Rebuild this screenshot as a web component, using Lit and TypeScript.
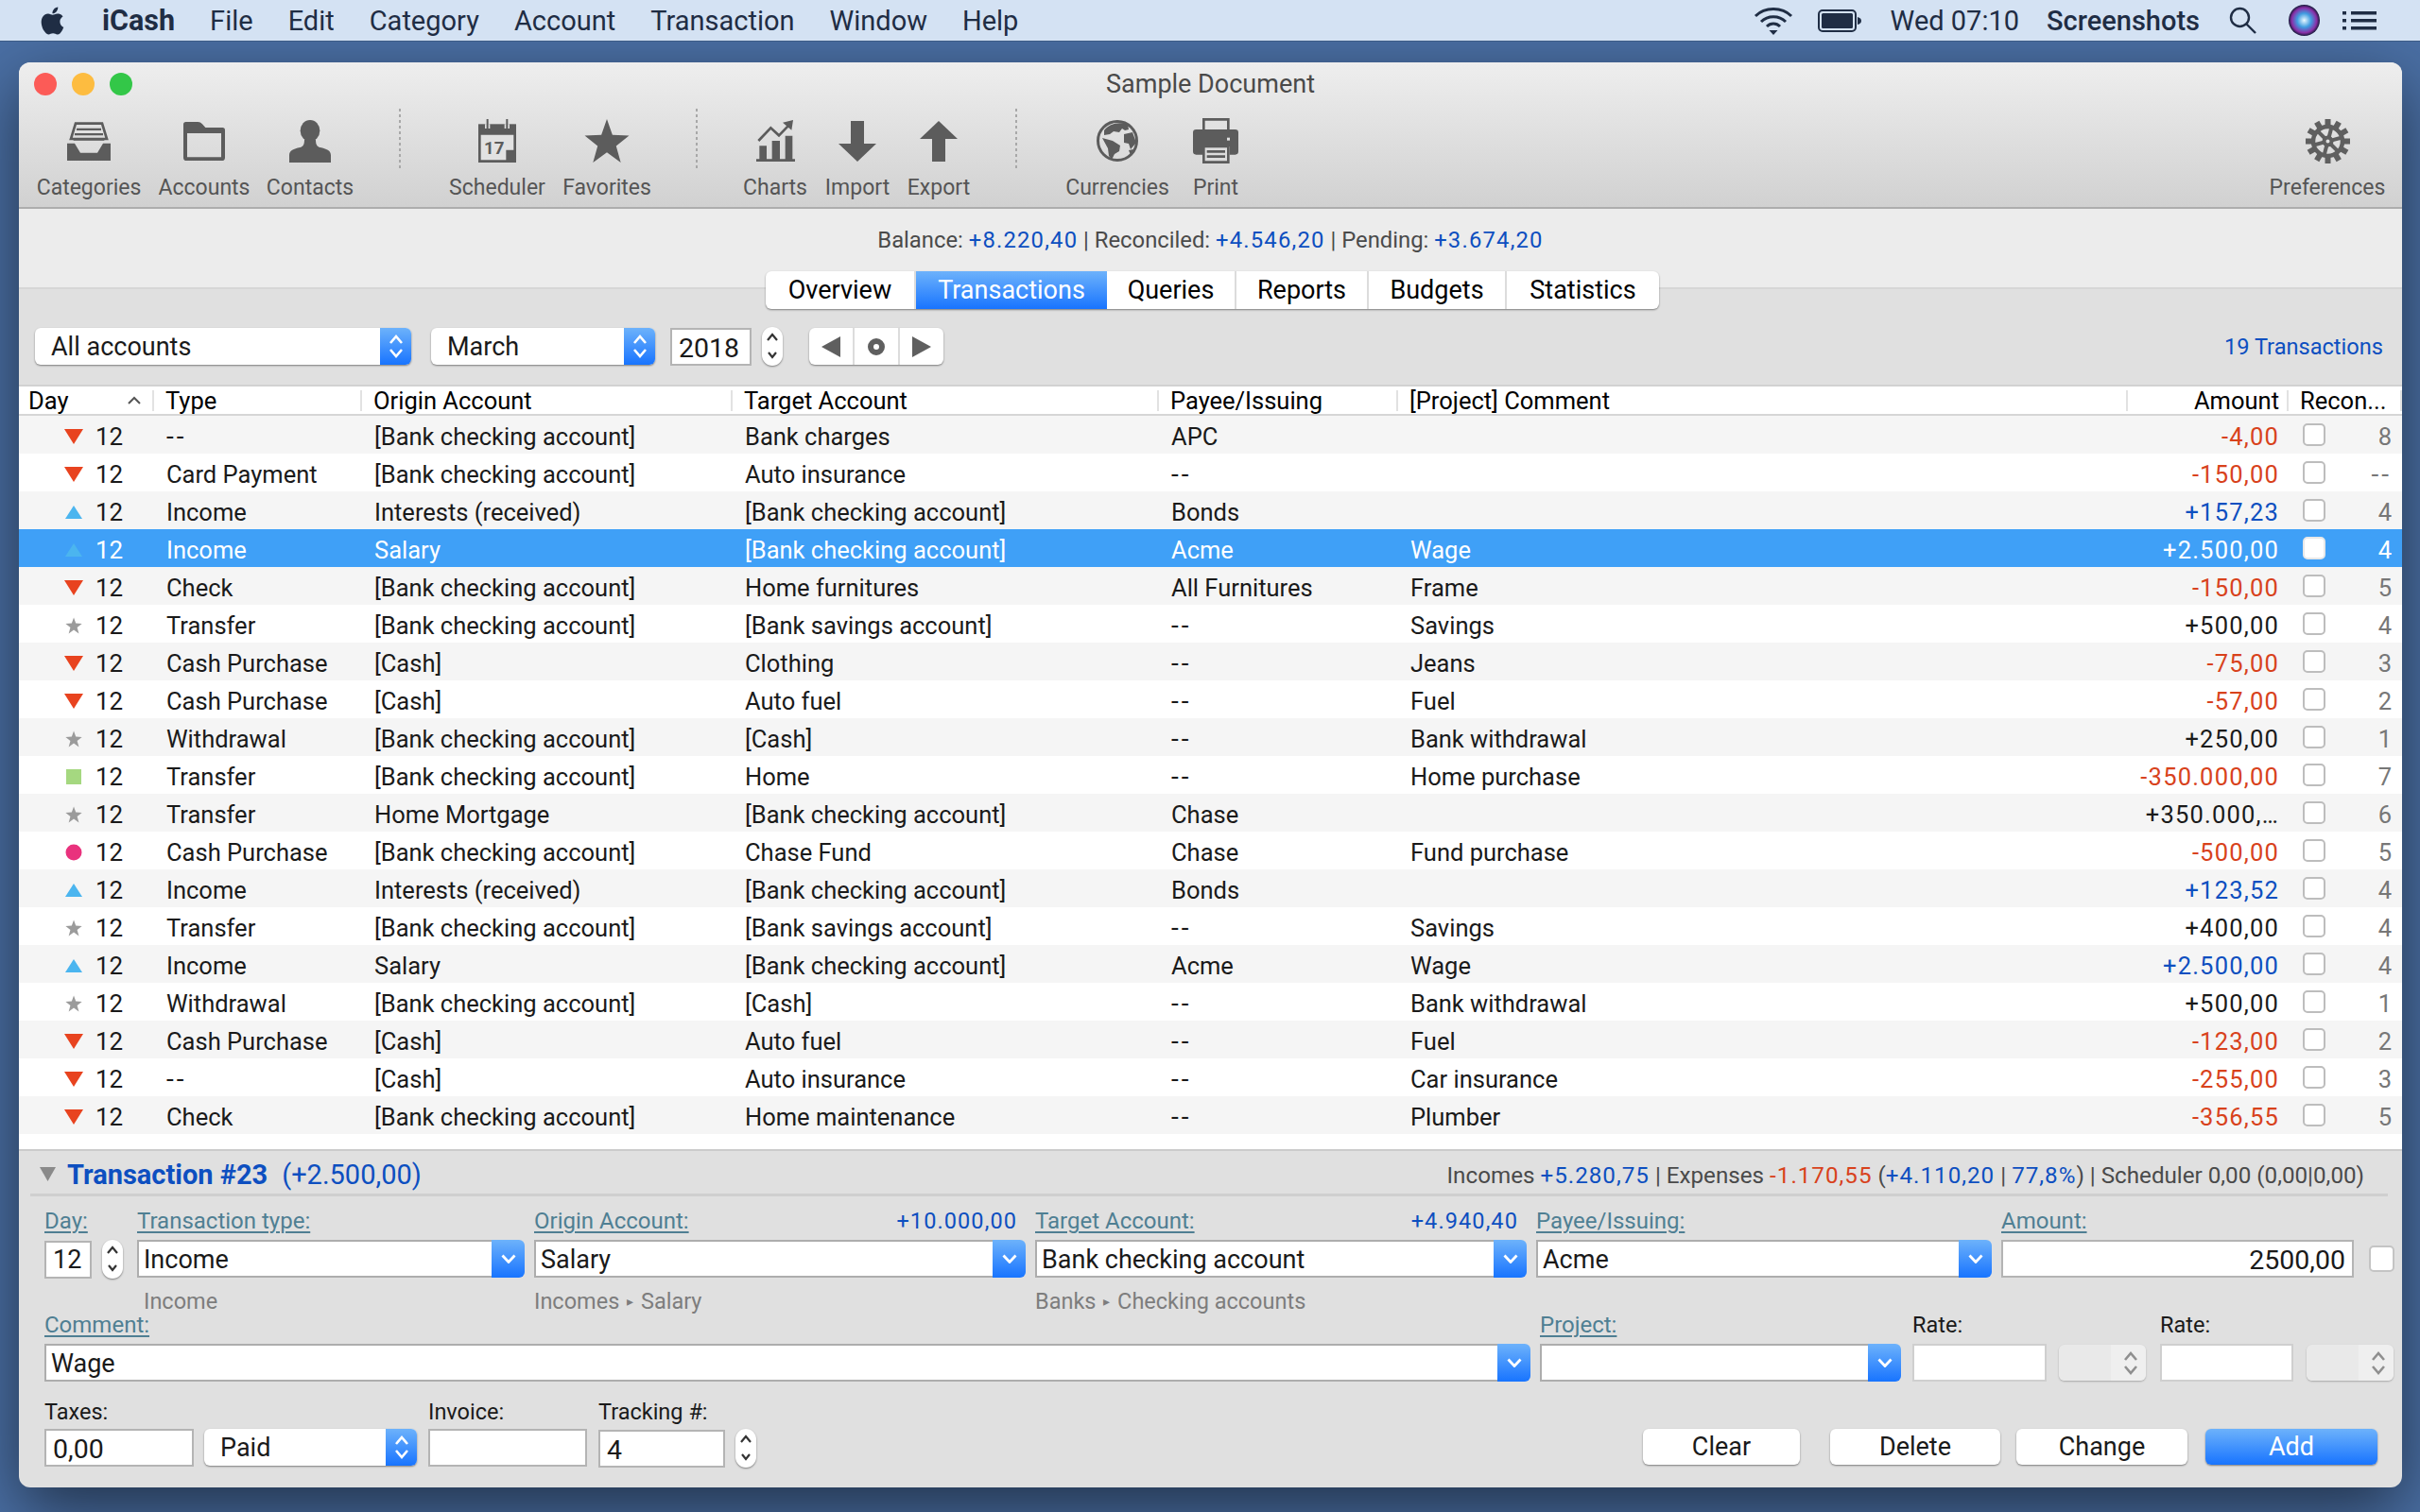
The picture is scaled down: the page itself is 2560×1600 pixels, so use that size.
import { LitElement, css, html, svg } from "lit";
import { customElement } from "lit/decorators.js";

type Tx = [string, string, string, string, string, string, string, string];

const ROWS: Tx[] = [
  ["down", "--", "[Bank checking account]", "Bank charges", "APC", "", "-4,00", "8"],
  ["down", "Card Payment", "[Bank checking account]", "Auto insurance", "--", "", "-150,00", "--"],
  ["up", "Income", "Interests (received)", "[Bank checking account]", "Bonds", "", "+157,23", "4"],
  ["up", "Income", "Salary", "[Bank checking account]", "Acme", "Wage", "+2.500,00", "4"],
  ["down", "Check", "[Bank checking account]", "Home furnitures", "All Furnitures", "Frame", "-150,00", "5"],
  ["star", "Transfer", "[Bank checking account]", "[Bank savings account]", "--", "Savings", "+500,00", "4"],
  ["down", "Cash Purchase", "[Cash]", "Clothing", "--", "Jeans", "-75,00", "3"],
  ["down", "Cash Purchase", "[Cash]", "Auto fuel", "--", "Fuel", "-57,00", "2"],
  ["star", "Withdrawal", "[Bank checking account]", "[Cash]", "--", "Bank withdrawal", "+250,00", "1"],
  ["square", "Transfer", "[Bank checking account]", "Home", "--", "Home purchase", "-350.000,00", "7"],
  ["star", "Transfer", "Home Mortgage", "[Bank checking account]", "Chase", "", "+350.000,…", "6"],
  ["circle", "Cash Purchase", "[Bank checking account]", "Chase Fund", "Chase", "Fund purchase", "-500,00", "5"],
  ["up", "Income", "Interests (received)", "[Bank checking account]", "Bonds", "", "+123,52", "4"],
  ["star", "Transfer", "[Bank checking account]", "[Bank savings account]", "--", "Savings", "+400,00", "4"],
  ["up", "Income", "Salary", "[Bank checking account]", "Acme", "Wage", "+2.500,00", "4"],
  ["star", "Withdrawal", "[Bank checking account]", "[Cash]", "--", "Bank withdrawal", "+500,00", "1"],
  ["down", "Cash Purchase", "[Cash]", "Auto fuel", "--", "Fuel", "-123,00", "2"],
  ["down", "--", "[Cash]", "Auto insurance", "--", "Car insurance", "-255,00", "3"],
  ["down", "Check", "[Bank checking account]", "Home maintenance", "--", "Plumber", "-356,55", "5"],
];

const SELECTED = 3;
const STAR = "12,0 15,8.5 24,9 17,14.5 19.5,23.5 12,18 4.5,23.5 7,14.5 0,9 9,8.5";

const marker = (kind: string) => {
  const shapes: Record<string, unknown> = {
    down: svg`<polygon points="0,0 20,0 10,16" fill="#e8431f" />`,
    up: svg`<polygon points="1,15 19,15 10,1" fill="#4bb5ef" />`,
    star: svg`<polygon points=${STAR} fill="#9b9b9b" transform="translate(1.4 -.5) scale(.72)" />`,
    square: svg`<rect x="2" y="0" width="16" height="16" fill="#a5d880" />`,
    circle: svg`<circle cx="10" cy="8" r="8.5" fill="#e9327d" />`,
  };
  return html`<svg class="marker" viewBox="0 0 20 16">${shapes[kind]}</svg>`;
};

// SF's hyphen is much wider than Roboto's
const cell = (v: string) => (v === "--" ? html`<span class="dash">--</span>` : v);

const upDown = html`<svg class="updown" viewBox="0 0 16 27">
  <path d="M2 10 8 3l6 7M2 17l6 7 6-7" fill="none" stroke="currentColor" stroke-width="2.6" />
</svg>`;

const downOnly = html`<svg class="downonly" viewBox="0 0 16 10">
  <path d="M1.5 1.5 8 8.5l6.5-7" fill="none" stroke="#fff" stroke-width="2.8" />
</svg>`;

const stepper = html`<div class="stepper">
  <svg viewBox="0 0 22 41">
    <path d="M6 14l5-6 5 6M7 27l4 5 4-5" fill="none" stroke="#333" stroke-width="2.2" />
  </svg>
</div>`;

const gear = svg`<g fill="#5f5f5f">
  ${Array.from({ length: 12 }, (_, i) => svg`<rect x="20.5" y="0" width="6" height="9" transform="rotate(${i * 30} 23.5 23.5)" />`)}
  ${Array.from({ length: 6 }, (_, i) => svg`<rect x="21.5" y="8" width="4" height="12" transform="rotate(${i * 60 + 15} 23.5 23.5)" />`)}
  </g>
  <circle cx="23.5" cy="23.5" r="15.5" fill="none" stroke="#5f5f5f" stroke-width="4.5" />
  <circle cx="23.5" cy="23.5" r="4" fill="none" stroke="#5f5f5f" stroke-width="4" />`;

const TOOL_ICONS: Record<string, unknown> = {
  Categories: html`<svg width="46" height="41" viewBox="0 0 138 123">
    <path d="M0 68H24L42 98H96L114 68H138V123H0Z" />
    <path d="M27 5H111L126 54H12Z" fill="none" stroke="#5c5c5c" stroke-width="8" />
    <path d="M30 20H108V27H30ZM24 36H114V43H24ZM20 52H118V59H20Z" />
  </svg>`,
  Accounts: html`<svg width="44" height="41" viewBox="0 0 132 123">
    <path fill-rule="evenodd" d="M8 0H46Q54 0 60 7L70 18H124Q132 18 132 26V113Q132 123 122 123H10Q0 123 0 113V8Q0 0 8 0ZM12 36V112H120V36Z" />
  </svg>`,
  Contacts: html`<svg width="44" height="45" viewBox="0 0 132 135">
    <ellipse cx="66" cy="34" rx="31" ry="34" />
    <path d="M0 135V112C0 96 14 92 34 87C44 84 48 78 48 62H84C84 78 88 84 98 87C118 92 132 96 132 112V135Z" />
  </svg>`,
  Scheduler: html`<svg width="40" height="46" viewBox="0 0 120 138">
    <rect y="16" width="120" height="122" />
    <path d="M26 0h6v32h-6zM88 0h6v32h-6z" />
    <path d="M21 16h5v14h-5zM32 16h5v14h-5zM83 16h5v14h-5zM94 16h5v14h-5z" fill="#e0e0e0" />
    <path d="M8 50H112V98H88V130H8Z" fill="#e2e2e2" />
    <text x="18" y="112" font-size="56" font-weight="700" font-family="Roboto, sans-serif">17</text>
  </svg>`,
  Favorites: html`<svg width="48" height="46" viewBox="0 0 24 23.5"><polygon points=${STAR} /></svg>`,
  Charts: html`<svg width="41" height="44" viewBox="0 0 123 132">
    <path d="M0 124H123V132H0ZM10 82H33V124H10ZM50 66H75V124H50ZM92 50H115V124H92Z" />
    <path d="M7 66 46 25 72 49 106 14" fill="none" stroke="#5c5c5c" stroke-width="8" />
    <path d="M84 8 117 0 112 32Z" />
  </svg>`,
  Import: html`<svg width="40" height="43" viewBox="0 0 40 43"><path d="M13 0H27V24H40L20 43 0 24H13Z" /></svg>`,
  Export: html`<svg width="40" height="43" viewBox="0 0 40 43"><path d="M13 43H27V19H40L20 0 0 19H13Z" /></svg>`,
  Currencies: html`<svg width="44" height="44" viewBox="0 0 44 44">
    <circle cx="22" cy="22" r="20.5" fill="none" stroke="#5c5c5c" stroke-width="3" />
    <path d="M8 11C13 4 24 1 33 5L34 10 30 11 27 9 24 13 18 12 14 15 8 16Z" />
    <path d="M29 15 38 13 42 24 36 31 34 25 29 24Z" />
    <path d="M6 19 17 22 25 27 24 33 19 36 16 42 13 38 12 30Z" />
    <path d="M34 32 39 31 36 37Z" />
  </svg>`,
  Print: html`<svg width="48" height="48" viewBox="0 0 144 144">
    <path fill-rule="evenodd" d="M30 0H116V36H108V8H38V36H30Z" />
    <path d="M10 36H134Q144 36 144 46V106Q144 116 134 116H116V90H30V116H10Q0 116 0 106V46Q0 36 10 36Z" />
    <path fill-rule="evenodd" d="M30 86H116V144H30ZM38 94V136H108V94Z" />
    <path d="M44 102H102V110H44ZM44 118H102V126H44Z" />
    <rect x="108" y="62" width="9" height="9" fill="#e0e0e0" />
  </svg>`,
  Preferences: html`<svg width="47" height="47" viewBox="0 0 47 47">${gear}</svg>`,
};

@customElement("app-root")
export class AppRoot extends LitElement {
  static override styles = css`
    :host {
      display: block;
      width: 2560px;
      height: 1600px;
      overflow: hidden;
      background: #4a6fa4;
      font-family: Roboto, "Liberation Sans", sans-serif;
      color: #1a1a1a;
    }

    * {
      box-sizing: border-box;
    }

    /* menu bar */
    .menubar {
      position: relative;
      z-index: 2;
      display: flex;
      align-items: center;
      height: 44px;
      padding-left: 41px;
      background: #d4e2f3;
      border-bottom: 1px solid #3d5c86;
      color: #1f2d44;
      font-size: 29px;
    }
    .apple {
      width: 29px;
      height: 32px;
      margin-right: 38px;
      fill: #1f2d44;
    }
    .menubar span {
      margin-right: 37px;
    }
    .menubar b {
      font-size: 30.5px;
      font-weight: 700;
    }
    .menubar .status b {
      font-size: 29px;
      font-weight: 500;
    }
    .status {
      display: flex;
      align-items: center;
      margin-left: auto;
      height: 100%;
    }
    .status svg {
      flex: none;
    }
    .status span {
      margin-right: 0;
    }

    /* window */
    .window {
      display: flex;
      flex-direction: column;
      width: 2521px;
      height: 1508px;
      margin: 22px 0 0 20px;
      border-radius: 12px;
      overflow: hidden;
      background: #e0e0e0;
      box-shadow: 0 24px 70px rgba(0, 0, 0, 0.55);
    }
    .chrome {
      height: 155px;
      flex: none;
      background: linear-gradient(#eeeeee, #d1d1d1);
      border-bottom: 2px solid #adadad;
    }
    .titlebar {
      display: grid;
      grid-template-columns: 1fr auto 1fr;
      align-items: center;
      height: 44px;
      padding-top: 1px;
      font-size: 27px;
      color: #4a4a4a;
    }
    .lights {
      display: flex;
      gap: 16px;
      padding-left: 16px;
    }
    .lights i {
      width: 24px;
      height: 24px;
      border-radius: 50%;
    }
    .toolbar {
      display: grid;
      grid-template-columns: 124px 120px 104px 86px 120px 112px 78px 88px 86px 86px 78px 136px 72px 1fr 132px;
      padding: 14px 13px 0 12px;
      height: 109px;
    }
    .tool {
      display: flex;
      flex-direction: column;
      align-items: center;
      font-size: 23px;
      line-height: 27px;
      color: #555;
      white-space: nowrap;
    }
    .tool .ic {
      display: flex;
      align-items: center;
      justify-content: center;
      height: 50px;
      margin-bottom: 11px;
    }
    .tool svg {
      fill: #5c5c5c;
    }
    .sep {
      justify-self: center;
      width: 2px;
      height: 63px;
      margin-top: -9px;
      background: repeating-linear-gradient(#a8a8a8 0 3px, transparent 3px 6px);
    }

    /* balance + tabs */
    .summary {
      flex: none;
      height: 85px;
      padding-top: 19px;
      text-align: center;
      font-size: 23.8px;
      line-height: 28px;
      color: #4a4a4a;
      background: #ececec;
      border-bottom: 2px solid #d6d6d6;
    }
    .blue {
      color: #0d4fc0;
      letter-spacing: 1px;
    }
    .summary .blue {
      letter-spacing: 1.2px;
    }
    .red {
      color: #d8421c;
      letter-spacing: 1px;
    }
    .tabs {
      position: relative;
      display: flex;
      width: 945px;
      height: 40px;
      margin: -19px 0 0 790px;
      border-radius: 6px;
      overflow: hidden;
      background: #fff;
      box-shadow: 0 1px 2px rgba(0, 0, 0, 0.45);
      font-size: 27px;
      color: #000;
    }
    .tabs div {
      display: flex;
      align-items: center;
      justify-content: center;
      border-right: 2px solid #dcdcdc;
    }
    .tabs div:last-child {
      border-right: 0;
    }
    .tabs .on {
      color: #fff;
      border-right: 0;
      background: linear-gradient(#6db2fb, #1874ff);
    }

    /* filter bar */
    .filters {
      flex: none;
      display: flex;
      align-items: center;
      height: 80px;
      padding: 0 20px 1px 17px;
    }
    .popup {
      display: flex;
      align-items: center;
      justify-content: space-between;
      height: 39px;
      padding-left: 17px;
      border-radius: 6px;
      background: #fff;
      box-shadow: 0 1px 2px rgba(0, 0, 0, 0.45);
      font-size: 27px;
    }
    .popup .arrows {
      display: flex;
      align-items: center;
      justify-content: center;
      align-self: stretch;
      width: 33px;
      border-radius: 0 6px 6px 0;
      color: #fff;
      background: linear-gradient(#6db2fb, #1874ff);
    }
    .updown {
      width: 16px;
      height: 27px;
    }
    .field {
      display: flex;
      align-items: center;
      height: 40px;
      padding: 0 7px;
      border: 2px solid #b4b4b4;
      background: #fff;
      font-size: 27px;
    }
    .field.num {
      padding-top: 3px;
      font-size: 28.5px;
    }
    .stepper {
      flex: none;
      width: 22px;
      height: 41px;
      border-radius: 11px;
      background: #fff;
      box-shadow: 0 1px 2px rgba(0, 0, 0, 0.45);
    }
    .stepper svg {
      display: block;
      width: 22px;
      height: 41px;
    }
    .nav {
      display: flex;
      width: 142px;
      height: 39px;
      margin-left: 28px;
      border-radius: 6px;
      background: #fff;
      box-shadow: 0 1px 2px rgba(0, 0, 0, 0.45);
    }
    .nav div {
      display: flex;
      flex: 1;
      align-items: center;
      justify-content: center;
    }
    .nav div + div {
      border-left: 2px solid #dcdcdc;
    }
    .nav svg {
      fill: #5f5f5f;
    }
    .count {
      margin-left: auto;
      font-size: 23.6px;
      color: #0d4fc0;
    }

    /* table */
    .table {
      flex: none;
      height: 811px;
      background: #fff;
      border-top: 2px solid #d2d2d2;
      border-bottom: 2px solid #cbcbcb;
    }
    .head,
    .row {
      display: grid;
      grid-template-columns: 143px 220px 392px 451px 253px 772px 170px 120px;
    }
    .head {
      height: 31px;
      align-items: center;
      border-bottom: 2px solid #d6d6d6;
      font-size: 25.5px;
      color: #000;
    }
    .head div {
      display: flex;
      align-items: center;
      justify-content: space-between;
      height: 22px;
      padding: 0 12px;
      border-right: 2px solid #e2e2e2;
    }
    .head div:first-child {
      padding-left: 10px;
    }
    .head div.right {
      justify-content: flex-end;
      padding-right: 8px;
    }
    .caret {
      width: 14px;
      height: 9px;
    }
    .row {
      height: 40px;
      padding-top: 3px;
      align-items: center;
      font-size: 25.5px;
      white-space: nowrap;
    }
    .row.even {
      background: #f5f5f5;
    }
    .row > div {
      padding-left: 13px;
    }
    .row .day {
      display: flex;
      align-items: center;
      gap: 13px;
      padding-left: 48px;
      font-size: 26px;
    }
    .marker {
      flex: none;
      width: 20px;
      height: 16px;
      overflow: visible;
    }
    .dash {
      font-size: 28px;
      letter-spacing: 3px;
    }
    .row .amount {
      padding: 0 10px 0 0;
      text-align: right;
      letter-spacing: 1.2px;
    }
    .row .recon {
      display: flex;
      align-items: center;
      justify-content: space-between;
      padding: 0 11px 0 15px;
      color: #777;
    }
    .check {
      width: 24px;
      height: 24px;
      margin-bottom: 3px;
      border: 2px solid #bdbdbd;
      border-radius: 5px;
      background: #fff;
    }
    .row.sel {
      background: #3fa0f7;
      color: #fff;
    }
    .row.sel .blue,
    .row.sel .recon {
      color: #fff;
    }
    .row.sel .check {
      border-color: #e8e8e8;
    }

    /* transaction form */
    .panel {
      flex: 1;
      padding-left: 27px;
    }
    .panel-head {
      display: flex;
      align-items: center;
      height: 48px;
      margin: 0 15px 0 -15px;
      padding: 4px 25px 0 10px;
      border-bottom: 3px solid #cfcfcf;
    }
    .disclosure {
      width: 17px;
      height: 15px;
      margin-right: 12px;
      fill: #8a8a8a;
    }
    .panel-title {
      font-size: 29px;
      color: #0d4fc0;
    }
    .panel-title b {
      font-weight: 700;
      margin-right: 15px;
    }
    .stats {
      margin-left: auto;
      padding-top: 3px;
      font-size: 24.2px;
      color: #4a4a4a;
    }
    .form-row {
      display: flex;
      align-items: flex-start;
    }
    .cell {
      flex: none;
    }
    .lab {
      display: flex;
      justify-content: space-between;
      height: 28px;
      font-size: 23.5px;
      line-height: 28px;
      color: #1a1a1a;
      white-space: nowrap;
    }
    .lab u {
      font-size: 24px;
      color: #4f7f93;
      text-decoration-thickness: 2px;
      text-underline-offset: 3px;
    }
    .lab .amt {
      margin-right: 19px;
      letter-spacing: 1.1px;
      color: #0d4fc0;
    }
    .row-a {
      padding-top: 12px;
    }
    .row-a .lab {
      margin-bottom: 6px;
    }
    .row-b .lab {
      margin-bottom: 6px;
    }
    .row-c {
      margin-top: 18px;
    }
    .row-c .lab {
      margin-bottom: 4px;
    }
    .sub {
      height: 23px;
      margin-top: 13px;
      font-size: 23.5px;
      line-height: 24px;
      color: #7d7d7d;
      white-space: nowrap;
    }
    .sub.pad {
      padding-left: 7px;
    }
    .sub small {
      font-size: 14px;
      vertical-align: 3px;
      margin: 0 2px;
    }
    .combo {
      display: flex;
      height: 40px;
      font-size: 27px;
    }
    .combo .txt {
      display: flex;
      flex: 1;
      align-items: center;
      padding: 2px 0 0 5px;
      border: 2px solid #adadad;
      border-right: 0;
      background: #fff;
    }
    .combo .btn {
      display: flex;
      align-items: center;
      justify-content: center;
      width: 35px;
      border-radius: 0 6px 6px 0;
      background: linear-gradient(#6db2fb, #1874ff);
    }
    .downonly {
      width: 16px;
      height: 10px;
    }
    .pair {
      display: flex;
      align-items: center;
    }
    .big-check {
      width: 27px;
      height: 28px;
      margin-left: 16px;
      border: 2px solid #c4c4c4;
      border-radius: 5px;
      background: #fff;
    }
    .field.soft {
      border-color: #cfcfcf;
    }
    .disabled {
      display: flex;
      align-items: center;
      justify-content: flex-end;
      width: 92px;
      height: 38px;
      margin-top: 1px;
      padding-right: 8px;
      border-radius: 6px;
      color: #8f8f8f;
      background: linear-gradient(90deg, #e9e9e9 60%, #efefef 60%);
      box-shadow: 0 1px 2px rgba(0, 0, 0, 0.25);
    }
    .buttons {
      display: flex;
      margin: 32px 0 0 auto;
      padding-right: 26px;
    }
    .button {
      display: flex;
      align-items: center;
      justify-content: center;
      height: 38px;
      border-radius: 6px;
      background: #fff;
      box-shadow: 0 1px 2px rgba(0, 0, 0, 0.45);
      font-size: 27px;
    }
    .button.primary {
      color: #fff;
      background: linear-gradient(#6db2fb, #1874ff);
    }
  `;

  private combo(text: string, width: number) {
    return html`<div class="combo" style="width:${width}px">
      <div class="txt">${text}</div>
      <div class="btn">${downOnly}</div>
    </div>`;
  }

  private popup(text: string, width: number) {
    return html`<div class="popup" style="width:${width}px">
      <span>${text}</span>
      <div class="arrows">${upDown}</div>
    </div>`;
  }

  private field(text: string, width: number, kind = "") {
    return html`<div class="field ${kind}" style="width:${width}px">${text}</div>`;
  }

  private renderMenu() {
    const items = ["File", "Edit", "Category", "Account", "Transaction", "Window", "Help"];
    return html`<div class="menubar">
      <svg class="apple" viewBox="0 0 24 24">
        <path d="M12.152 6.896c-.948 0-2.415-1.078-3.96-1.04-2.04.027-3.91 1.183-4.961 3.014-2.117 3.675-.546 9.103 1.519 12.09 1.013 1.454 2.208 3.09 3.792 3.039 1.52-.065 2.09-.987 3.935-.987 1.831 0 2.35.987 3.96.948 1.637-.026 2.676-1.48 3.676-2.948 1.156-1.688 1.636-3.325 1.662-3.415-.039-.013-3.182-1.221-3.22-4.857-.026-3.04 2.48-4.494 2.597-4.559-1.429-2.09-3.623-2.324-4.39-2.376-2-.156-3.675 1.09-4.61 1.09zM15.53 3.83c.843-1.012 1.4-2.427 1.245-3.83-1.207.052-2.662.805-3.532 1.818-.78.896-1.454 2.338-1.273 3.714 1.338.104 2.715-.688 3.559-1.701" />
      </svg>
      <span><b>iCash</b></span>
      ${items.map((m) => html`<span>${m}</span>`)}
      <div class="status">
        <svg width="42" height="30" viewBox="0 0 42 30" fill="none" stroke="#1f2d44" stroke-width="3">
          <path d="M2 10C12 0 30 0 40 10M8 16C15 9 27 9 34 16M14 21C18 17 24 17 28 21" />
          <path d="M16.5 25h9L21 30Z" fill="#1f2d44" stroke="none" />
        </svg>
        <svg width="46" height="24" viewBox="0 0 46 24" style="margin:0 31px 0 26px">
          <rect x="1" y="1" width="39" height="22" rx="4" fill="none" stroke="#1f2d44" stroke-width="2" />
          <rect x="4" y="4" width="33" height="16" rx="1.5" fill="#1f2d44" />
          <path d="M42 8q4 1 4 4t-4 4Z" fill="#1f2d44" />
        </svg>
        <span>Wed 07:10</span>
        <span style="margin:0 31px 0 29px"><b>Screenshots</b></span>
        <svg width="29" height="29" viewBox="0 0 29 29" fill="none" stroke="#1f2d44" stroke-width="2.4">
          <circle cx="11.5" cy="11.5" r="9.5" />
          <path d="M18 18 28 28" />
        </svg>
        <svg width="33" height="33" viewBox="0 0 33 33" style="margin:0 24px 0 34px">
          <defs>
            <radialGradient id="siri" cx="50%" cy="50%" r="50%">
              <stop offset="0" stop-color="#e9f8ff" />
              <stop offset=".45" stop-color="#3f9be0" />
              <stop offset=".8" stop-color="#8a2fa8" />
              <stop offset="1" stop-color="#151a3a" />
            </radialGradient>
          </defs>
          <circle cx="16.5" cy="16.5" r="16.5" fill="url(#siri)" />
        </svg>
        <svg width="36" height="20" viewBox="0 0 36 20" fill="#1f2d44" style="margin-right:46px">
          <path d="M0 0h4v3.5H0ZM9 0h27v3.5H9ZM0 8h4v3.5H0ZM9 8h27v3.5H9ZM0 16h4v3.5H0ZM9 16h27v3.5H9Z" />
        </svg>
      </div>
    </div>`;
  }

  private renderToolbar() {
    const tool = (name: string) =>
      html`<div class="tool"><div class="ic">${TOOL_ICONS[name]}</div>${name}</div>`;
    return html`<div class="chrome">
      <div class="titlebar">
        <div class="lights">
          <i style="background:#fc5b57"></i>
          <i style="background:#fdbc40"></i>
          <i style="background:#33c748"></i>
        </div>
        <div>Sample Document</div>
        <div></div>
      </div>
      <div class="toolbar">
        ${tool("Categories")}${tool("Accounts")}${tool("Contacts")}
        <div class="sep"></div>
        ${tool("Scheduler")}${tool("Favorites")}
        <div class="sep"></div>
        ${tool("Charts")}${tool("Import")}${tool("Export")}
        <div class="sep"></div>
        ${tool("Currencies")}${tool("Print")}
        <div></div>
        ${tool("Preferences")}
      </div>
    </div>`;
  }

  private renderTable() {
    const tone = (v: string) => (v.startsWith("-") ? "red" : "");
    return html`<div class="table">
      <div class="head">
        <div>Day
          <svg class="caret" viewBox="0 0 14 9"><path d="M1 8l6-6 6 6" fill="none" stroke="#555" stroke-width="2" /></svg>
        </div>
        <div>Type</div>
        <div>Origin Account</div>
        <div>Target Account</div>
        <div>Payee/Issuing</div>
        <div>[Project] Comment</div>
        <div class="right">Amount</div>
        <div>Recon...</div>
      </div>
      ${ROWS.map((r, i) => {
        const color = r[0] === "up" ? "blue" : tone(r[6]);
        return html`<div class="row ${i % 2 === 0 ? "even" : ""} ${i === SELECTED ? "sel" : ""}">
          <div class="day">${marker(r[0])}<span>12</span></div>
          <div>${cell(r[1])}</div>
          <div>${r[2]}</div>
          <div>${r[3]}</div>
          <div>${cell(r[4])}</div>
          <div>${r[5]}</div>
          <div class="amount ${color}">${r[6]}</div>
          <div class="recon"><div class="check"></div><span>${cell(r[7])}</span></div>
        </div>`;
      })}
    </div>`;
  }

  private renderPanel() {
    return html`<div class="panel">
      <div class="panel-head">
        <svg class="disclosure" viewBox="0 0 17 15"><polygon points="0,0 17,0 8.5,15" /></svg>
        <div class="panel-title"><b>Transaction #23</b>(+2.500,00)</div>
        <div class="stats">
          Incomes <span class="blue">+5.280,75</span> | Expenses <span class="red">-1.170,55</span>
          (<span class="blue">+4.110,20</span> | <span class="blue">77,8%</span>) | Scheduler 0,00 (0,00|0,00)
        </div>
      </div>

      <div class="form-row row-a">
        <div class="cell" style="width:98px">
          <div class="lab"><u>Day:</u></div>
          <div class="pair">${this.field("12", 50)}<span style="width:11px"></span>${stepper}</div>
        </div>
        <div class="cell" style="width:420px">
          <div class="lab"><u>Transaction type:</u></div>
          ${this.combo("Income", 410)}
          <div class="sub pad">Income</div>
        </div>
        <div class="cell" style="width:530px">
          <div class="lab"><u>Origin Account:</u><span class="amt">+10.000,00</span></div>
          ${this.combo("Salary", 520)}
          <div class="sub">Incomes <small>▸</small> Salary</div>
        </div>
        <div class="cell" style="width:530px">
          <div class="lab"><u>Target Account:</u><span class="amt">+4.940,40</span></div>
          ${this.combo("Bank checking account", 520)}
          <div class="sub">Banks <small>▸</small> Checking accounts</div>
        </div>
        <div class="cell" style="width:492px">
          <div class="lab"><u>Payee/Issuing:</u></div>
          ${this.combo("Acme", 482)}
        </div>
        <div class="cell" style="width:416px">
          <div class="lab"><u>Amount:</u></div>
          <div class="pair">
            <div class="field num" style="width:373px;justify-content:flex-end">2500,00</div>
            <div class="big-check"></div>
          </div>
        </div>
      </div>

      <div class="form-row row-b">
        <div class="cell" style="width:1582px">
          <div class="lab"><u>Comment:</u></div>
          ${this.combo("Wage", 1572)}
        </div>
        <div class="cell" style="width:394px">
          <div class="lab"><u>Project:</u></div>
          ${this.combo("", 382)}
        </div>
        <div class="cell" style="width:155px">
          <div class="lab">Rate:</div>
          ${this.field("", 142, "soft")}
        </div>
        <div class="cell" style="width:107px;padding-top:34px">
          <div class="disabled">${upDown}</div>
        </div>
        <div class="cell" style="width:155px">
          <div class="lab">Rate:</div>
          ${this.field("", 141, "soft")}
        </div>
        <div class="cell" style="width:92px;padding-top:34px">
          <div class="disabled">${upDown}</div>
        </div>
      </div>

      <div class="form-row row-c">
        <div class="cell" style="width:169px">
          <div class="lab">Taxes:</div>
          ${this.field("0,00", 158, "num")}
        </div>
        <div class="cell" style="width:237px;padding-top:32px">${this.popup("Paid", 225)}</div>
        <div class="cell" style="width:180px">
          <div class="lab">Invoice:</div>
          ${this.field("", 168)}
        </div>
        <div class="cell" style="width:167px">
          <div class="lab">Tracking #:</div>
          <div class="pair">${this.field("4", 134, "num")}<span style="width:11px"></span>${stepper}</div>
        </div>
        <div class="buttons">
          <div class="button" style="width:166px">Clear</div>
          <div class="button" style="width:180px;margin-left:32px">Delete</div>
          <div class="button" style="width:181px;margin-left:17px">Change</div>
          <div class="button primary" style="width:182px;margin-left:19px">Add</div>
        </div>
      </div>
    </div>`;
  }

  override render() {
    const tabs: [string, number][] = [
      ["Overview", 159],
      ["Transactions", 202],
      ["Queries", 137],
      ["Reports", 140],
      ["Budgets", 146],
      ["Statistics", 161],
    ];
    return html`
      ${this.renderMenu()}
      <div class="window">
        ${this.renderToolbar()}
        <div class="summary">
          Balance: <span class="blue">+8.220,40</span> | Reconciled: <span class="blue">+4.546,20</span> |
          Pending: <span class="blue">+3.674,20</span>
        </div>
        <div class="tabs">
          ${tabs.map(
            ([t, w]) => html`<div class=${t === "Transactions" ? "on" : ""} style="width:${w}px">${t}</div>`,
          )}
        </div>
        <div class="filters">
          ${this.popup("All accounts", 398)}
          <span style="width:21px"></span>
          ${this.popup("March", 237)}
          <span style="width:16px"></span>
          ${this.field("2018", 86, "num")}
          <span style="width:11px"></span>
          ${stepper}
          <div class="nav">
            <div><svg width="20" height="22" viewBox="0 0 20 22"><polygon points="20,0 20,22 0,11" /></svg></div>
            <div>
              <svg width="18" height="18" viewBox="0 0 18 18">
                <circle cx="9" cy="9" r="6" fill="none" stroke="#5f5f5f" stroke-width="6" />
              </svg>
            </div>
            <div><svg width="20" height="22" viewBox="0 0 20 22"><polygon points="0,0 0,22 20,11" /></svg></div>
          </div>
          <div class="count">19 Transactions</div>
        </div>
        ${this.renderTable()} ${this.renderPanel()}
      </div>
    `;
  }
}

declare global {
  interface HTMLElementTagNameMap {
    "app-root": AppRoot;
  }
}
